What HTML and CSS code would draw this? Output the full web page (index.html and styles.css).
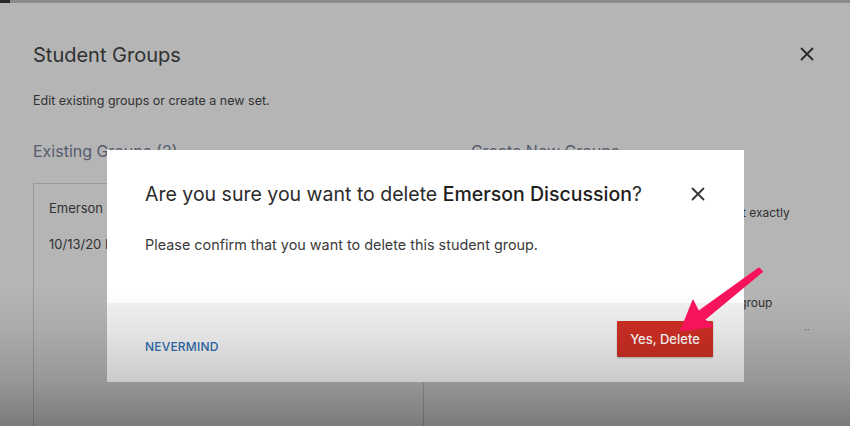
FILE: index.html
```html
<!DOCTYPE html>
<html lang="en">
<head>
<meta charset="utf-8">
<title>Student Groups</title>
<link rel="stylesheet" href="styles.css">
</head>
<body>
<div class="topbar"><span class="topbar-dark"></span></div>
<main class="panel">
  <header class="panel-head">
    <h1 class="panel-title">Student Groups</h1>
    <button class="icon-btn panel-close" aria-label="Close">
      <svg width="14" height="14" viewBox="0 0 14 14"><path d="M1.5 1.5 L12.5 12.5 M12.5 1.5 L1.5 12.5" stroke="currentColor" stroke-width="1.8" stroke-linecap="round"/></svg>
    </button>
  </header>
  <p class="panel-sub">Edit existing groups or create a new set.</p>
  <div class="cols">
    <section class="col-left">
      <h2 class="col-title">Existing Groups (2)</h2>
      <div class="group-card">
        <div class="group-name">Emerson Discussion</div>
        <div class="group-date">10/13/20 Fall Semester</div>
      </div>
    </section>
    <section class="col-right">
      <h2 class="col-title">Create New Groups</h2>
      <p class="opt-line first">Split the class so that each new group has about exactly</p>
      <p class="opt-line second">Students will be shuffled at random into every group</p>
      <div class="opt-dots">··</div>
    </section>
  </div>
</main>

<div class="backdrop"></div>

<div class="dialog" role="dialog">
  <div class="dialog-body">
    <div class="dialog-head">
      <h3 class="dialog-title">Are you sure you want to delete <strong>Emerson Discussion</strong>?</h3>
      <button class="icon-btn dialog-close" aria-label="Close">
        <svg width="14" height="14" viewBox="0 0 14 14"><path d="M1.5 1.5 L12.5 12.5 M12.5 1.5 L1.5 12.5" stroke="currentColor" stroke-width="1.8" stroke-linecap="round"/></svg>
      </button>
    </div>
    <p class="dialog-text">Please confirm that you want to delete this student group.</p>
  </div>
  <div class="dialog-foot">
    <button class="link-btn">NEVERMIND</button>
    <button class="danger-btn">Yes, Delete</button>
  </div>
</div>

<div class="video-shade"></div>

<svg class="pointer-arrow" width="850" height="426" viewBox="0 0 850 426">
  <polygon points="759,268.2 762.2,271.6 704.5,319.5 712.5,326.5 681,330.5 693,300.5 698.5,311.5" fill="#f7145c" stroke="#f7145c" stroke-width="1.5" stroke-linejoin="round"/>
</svg>
</body>
</html>
```

FILE: styles.css
```css
* { box-sizing: border-box; }
html, body { margin: 0; padding: 0; }
body {
  width: 850px;
  height: 426px;
  overflow: hidden;
  background: #ffffff;
  font-family: Inter, "Noto Sans", "Liberation Sans", sans-serif;
  color: #444;
  position: relative;
}
.topbar {
  height: 3px;
  background: #c4c4c4;
  display: flex;
}
.topbar-dark { width: 10px; background: #3a3a3a; }

.panel { padding: 0 36px 0 33px; }
.panel-head {
  display: flex;
  align-items: center;
  justify-content: space-between;
  padding-top: 39px;
}
.panel-title {
  margin: 0;
  font-size: 20px;
  line-height: 26px;
  font-weight: 400;
  color: #454545;
}
.icon-btn {
  border: 0;
  background: none;
  padding: 0;
  display: flex;
  color: #3a3a3a;
  cursor: pointer;
}
.panel-close { margin-top: -3px; }
.panel-sub {
  margin: 25px 0 0;
  font-size: 12.5px;
  line-height: 16px;
  color: #484848;
}
.cols {
  display: flex;
  gap: 47px;
  margin-top: 31px;
}
.col-left { width: 391px; }
.col-right { flex: 1; }
.col-title {
  margin: 0;
  font-size: 16px;
  line-height: 22px;
  font-weight: 400;
  color: #78839a;
}
.col-right .col-title { margin-top: 0; }
.group-card {
  margin-top: 21px;
  border: 1px solid #d6d6d6;
  border-bottom: 0;
  height: 260px;
  padding: 16px 15px;
  font-size: 13px;
  color: #474747;
}
.group-name { line-height: 16px; white-space: nowrap; }
.group-date { margin-top: 20px; line-height: 16px; white-space: nowrap; }
.opt-line {
  margin: 0;
  font-size: 12px;
  line-height: 16px;
  white-space: nowrap;
  color: #474747;
}
.opt-line.first { margin-top: 43px; }
.opt-line.second { margin-top: 74px; padding-left: 5px; }
.opt-dots {
  margin: 13px 0 0 333px;
  font-size: 10px;
  color: #9a9a9a;
  line-height: 10px;
}

.backdrop {
  position: absolute;
  inset: 0;
  background: rgba(0, 0, 0, 0.29);
}

.dialog {
  position: absolute;
  left: 107px;
  top: 150px;
  width: 637px;
  height: 232px;
  background: #fff;
  display: flex;
  flex-direction: column;
}
.dialog-body {
  padding: 30px 39px 0 38px;
  height: 153px;
}
.dialog-head {
  display: flex;
  align-items: center;
  justify-content: space-between;
}
.dialog-title {
  margin: 0;
  font-size: 19.5px;
  line-height: 28px;
  font-weight: 400;
  color: #2b2b2b;
}
.dialog-title strong { font-weight: 500; color: #1e1e1e; }
.dialog-close { color: #333; }
.dialog-text {
  margin: 27px 0 0;
  font-size: 14.4px;
  line-height: 20px;
  color: #3a3a3a;
}
.dialog-foot {
  flex: 1;
  background: #f3f3f3;
  display: flex;
  align-items: center;
  justify-content: space-between;
  padding: 7px 31px 0 38px;
}
.link-btn {
  border: 0;
  background: none;
  padding: 0;
  font: inherit;
  font-size: 12px;
  font-weight: 500;
  color: #2f6bb0;
  letter-spacing: 0.2px;
}
.danger-btn {
  border: 0;
  width: 96px;
  height: 36px;
  margin-top: -15px;
  background: #cf2f24;
  color: #fff;
  font: inherit;
  font-size: 13px;
  font-weight: 500;
  border-radius: 1px;
  box-shadow: 0 1px 2px rgba(0,0,0,0.25);
}

.video-shade {
  position: absolute;
  inset: 0;
  pointer-events: none;
  background: linear-gradient(to bottom,
    rgba(0,0,0,0) 0,
    rgba(0,0,0,0) 290px,
    rgba(0,0,0,0.06) 330px,
    rgba(0,0,0,0.17) 382px,
    rgba(0,0,0,0.32) 426px);
}

.pointer-arrow {
  position: absolute;
  left: 0;
  top: 0;
  pointer-events: none;
}
```
